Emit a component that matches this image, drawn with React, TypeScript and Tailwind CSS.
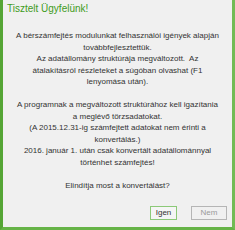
export default function App() {
  return (
    <div
      className="w-[235px] h-[230px] bg-[#f0f0f0] border-l-[3px] border-r-[3px] border-b-[3px] border-l-[#55a535] border-r-[#72bb55] border-b-[#66b347] flex flex-col"
      style={{ fontFamily: '"Liberation Sans", Arial, sans-serif' }}
    >
      <div className="pl-[4px] pt-[3px] text-[10px] leading-[12px] text-[#3f9b22]">
        Tisztelt Ügyfelünk!
      </div>

      <div className="mt-[15px] text-center text-[8px] leading-[11.5px] text-[#333333] whitespace-nowrap">
        <p>A bérszámfejtés modulunkat felhasználói igények alapján</p>
        <p>továbbfejlesztettük.</p>
        <p>Az adatállomány struktúrája megváltozott.&nbsp; Az</p>
        <p>átalakításról részleteket a súgóban olvashat (F1</p>
        <p>lenyomása után).</p>
        <p>&nbsp;</p>
        <p>A programnak a megváltozott struktúrához kell igazítania</p>
        <p>a meglévő törzsadatokat.</p>
        <p>(A 2015.12.31-ig számfejtett adatokat nem érinti a</p>
        <p>konvertálás.)</p>
        <p>2016. január 1. után csak konvertált adatállománnyal</p>
        <p>történhet számfejtés!</p>
        <p>&nbsp;</p>
        <p>Elindítja most a konvertálást?</p>
      </div>

      <div className="mt-auto mb-[7px] flex justify-end gap-[14px] pr-[5px]">
        <button className="w-[27px] h-[14px] border border-[#8cc978] bg-[#f5f5f5] text-[8px] leading-[12px] text-[#333333]">
          Igen
        </button>
        <button className="w-[36px] h-[14px] border border-[#b5b5b5] bg-[#f0f0f0] text-[8px] leading-[12px] text-[#9a9a9a]">
          Nem
        </button>
      </div>
    </div>
  )
}
